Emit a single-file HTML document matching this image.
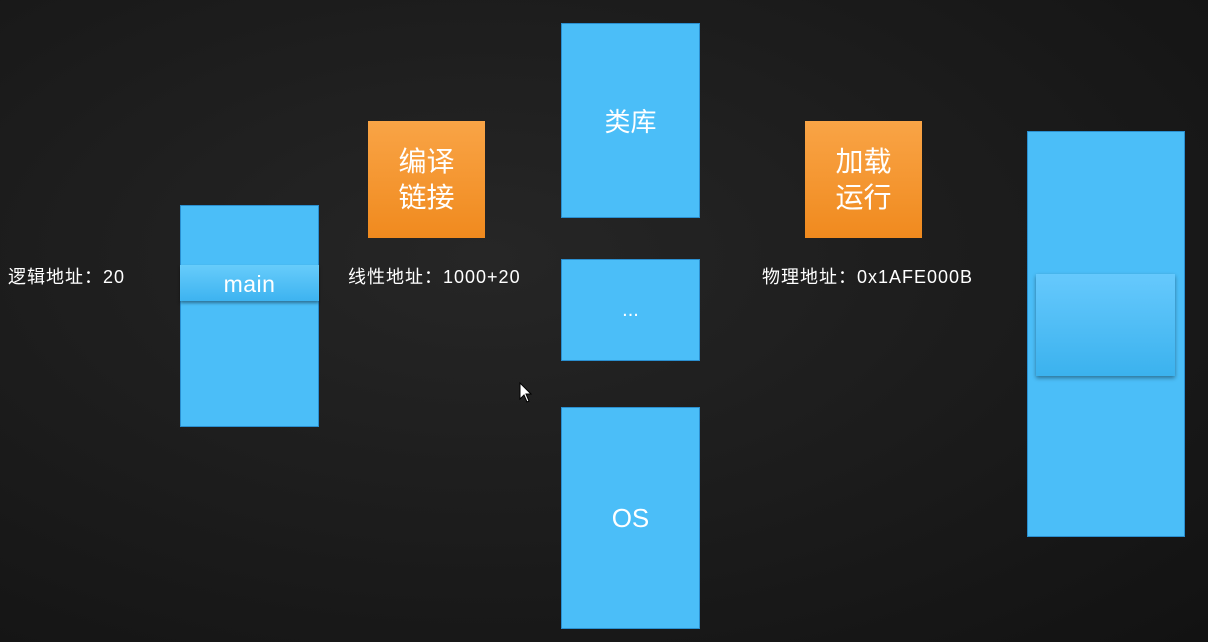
<!DOCTYPE html>
<html><head><meta charset="utf-8"><style>
body{margin:0;width:1208px;height:642px;overflow:hidden;background:#1c1c1c;position:relative;font-family:"Liberation Sans","Noto Sans CJK SC",sans-serif;color:#fff}
.b{position:absolute;background:#4bbef8;border:1px solid #2a8fd0;box-sizing:border-box}
.o{position:absolute;background:linear-gradient(#f9a446,#f08a1e);color:#fff;font-size:28px;line-height:36px;text-align:center;display:flex;align-items:center;justify-content:center}
.t{position:absolute;font-size:18px;white-space:nowrap;letter-spacing:1px}
.c{display:flex;align-items:center;justify-content:center;font-size:26px}
</style></head><body>
<div style="position:absolute;inset:0;background:radial-gradient(ellipse at 40% 40%,#262626,#121212)"></div>
<div class="t" style="left:8px;top:263px">逻辑地址：20</div>
<div class="b" style="left:180px;top:205px;width:139px;height:222px"></div>
<div style="position:absolute;left:180px;top:265px;width:139px;height:36px;background:linear-gradient(#67ccfb,#3db3f0);box-shadow:0 2px 3px rgba(0,0,0,.4);font-size:23px;text-align:center;line-height:38px;letter-spacing:0.5px">main</div>
<div class="o" style="left:368px;top:121px;width:117px;height:117px">编译<br>链接</div>
<div class="t" style="left:348px;top:263px">线性地址：1000+20</div>
<div class="b c" style="left:561px;top:23px;width:139px;height:195px">类库</div>
<div class="b c" style="left:561px;top:259px;width:139px;height:102px;font-size:20px">...</div>
<div class="b c" style="left:561px;top:407px;width:139px;height:222px">OS</div>
<div class="o" style="left:805px;top:121px;width:117px;height:117px">加载<br>运行</div>
<div class="t" style="left:762px;top:263px">物理地址：0x1AFE000B</div>
<div class="b" style="left:1027px;top:131px;width:158px;height:406px"></div>
<div style="position:absolute;left:1036px;top:274px;width:139px;height:102px;background:linear-gradient(#66c9fd,#3bb2ee);box-shadow:0 2px 4px rgba(0,0,0,.4)"></div>
<svg style="position:absolute;left:519px;top:382px" width="14" height="22"><path d="M1 1 L1 17 L5 13 L8 20 L10 19 L7 12 L12 12 Z" fill="#fff" stroke="#000" stroke-width="1"/></svg>
</body></html>
